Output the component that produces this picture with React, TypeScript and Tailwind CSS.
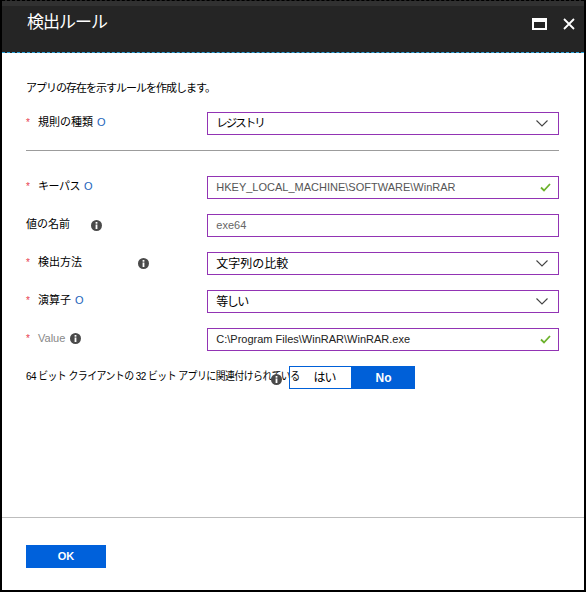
import React from 'react'

const jp = "font-['Segoe_UI','Liberation_Sans','Noto_Sans_CJK_JP',sans-serif]"
const boxCls = 'h-[23px] w-[353px] border border-[#9234b4] flex items-center pl-[8px] pr-[6px]'
const latin = " font-['Liberation_Sans',sans-serif] text-[11px]"

function Info({ className = '' }: { className?: string }) {
  return (
    <svg width="11" height="11" viewBox="0 0 11 11" className={className}>
      <circle cx="5.5" cy="5.5" r="5.5" fill="#4a4a4a" />
      <rect x="4.6" y="2" width="1.8" height="1.7" fill="#fff" />
      <rect x="4.6" y="4.5" width="1.8" height="4.5" fill="#fff" />
    </svg>
  )
}

function Chevron() {
  return (
    <svg width="12" height="7" viewBox="0 0 12 7" className="ml-auto mr-[4px]">
      <polyline points="0.5,0.5 6,6 11.5,0.5" fill="none" stroke="#444" strokeWidth="1.1" />
    </svg>
  )
}

function Check() {
  return (
    <svg width="11" height="9" viewBox="0 0 11 9" className="ml-auto mr-[1px]">
      <polyline points="1,4.5 4,7.5 10,1" fill="none" stroke="#6cb22c" strokeWidth="1.8" />
    </svg>
  )
}

function Star() {
  return <span className="text-[#e8404f] text-[10px] w-[12px] inline-block">*</span>
}

function Ring() {
  return <span className="ml-[4px] text-[#1d64bb] text-[11px] font-['Liberation_Sans',sans-serif]">O</span>
}

type RowProps = {
  label: React.ReactNode
  children: React.ReactNode
  className?: string
}

function Row({ label, children, className = '' }: RowProps) {
  return (
    <div className={'flex items-center ' + className}>
      <div className="w-[182px] flex items-center text-[11px] text-black -mt-[3px]">{label}</div>
      {children}
    </div>
  )
}

export default function App() {
  return (
    <div className={'w-[586px] h-[592px] bg-white border-x-2 border-b-2 border-black flex flex-col ' + jp}>
      {/* title bar */}
      <div className="h-[53px] bg-[#252525] border-t-[1px] border-black border-b border-b-[#2aa3dc] border-dashed flex flex-col shrink-0">
        <div className="h-[5px] bg-[#313131]" />
        <div className="flex-1 flex items-center pl-[25px] pr-[9px] -mt-[12px]">
          <span className="text-white text-[17px] tracking-[-1px]">検出ルール</span>
          <div className="ml-auto flex items-center gap-[16px] mt-[2px]">
            <svg width="15" height="12" viewBox="0 0 15 12">
              <rect x="1" y="1" width="13" height="10" fill="none" stroke="#fff" strokeWidth="2" />
              <rect x="1" y="1" width="13" height="3" fill="#fff" />
            </svg>
            <svg width="12" height="12" viewBox="0 0 12 12">
              <path d="M1 1 L11 11 M11 1 L1 11" stroke="#fff" strokeWidth="1.8" />
            </svg>
          </div>
        </div>
      </div>

      {/* body */}
      <div className="flex-1 pl-[24px] pr-[25px] pt-[28px]">
        <div className="text-[11px] leading-[14px] tracking-[-1px] text-black">アプリの存在を示すルールを作成します。</div>

        <Row className="mt-[17px]" label={<><Star />規則の種類<Ring /></>}>
          <div className={boxCls + ' text-black text-[11.5px]'}>
            <span className="tracking-[-2px]">レジストリ</span>
            <Chevron />
          </div>
        </Row>

        <div className="mt-[15px] h-px bg-[#9c9c9c] w-[533px]" />

        <Row className="mt-[25px]" label={<><Star /><span className="tracking-[-0.5px]">キーパス</span><Ring /></>}>
          <div className={boxCls + ' text-[#555]' + latin}>
            HKEY_LOCAL_MACHINE\SOFTWARE\WinRAR
            <Check />
          </div>
        </Row>

        <Row className="mt-[15px]" label={<>値の名前<Info className="ml-[21px] mt-[3px]" /></>}>
          <div className={boxCls + ' text-[#666]' + latin}>exe64</div>
        </Row>

        <Row className="mt-[15px]" label={<><Star />検出方法<Info className="ml-[56px] mt-[3px]" /></>}>
          <div className={boxCls + ' text-black text-[12px]'}>
            文字列の比較
            <Chevron />
          </div>
        </Row>

        <Row className="mt-[15px]" label={<><Star />演算子<Ring /></>}>
          <div className={boxCls + ' text-black text-[12px]'}>
            <span className="tracking-[-1.5px]">等しい</span>
            <Chevron />
          </div>
        </Row>

        <Row
          className="mt-[15px]"
          label={
            <>
              <Star />
              <span className="text-[#888] font-['Liberation_Sans',sans-serif] text-[11px]">Value</span>
              <Info className="ml-[5px] mt-[1px]" />
            </>
          }
        >
          <div className={boxCls + ' text-[#222]' + latin}>
            C:\Program Files\WinRAR\WinRAR.exe
            <Check />
          </div>
        </Row>

        <div className="mt-[15px] flex items-center">
          <div className="relative w-[263px] shrink-0 whitespace-nowrap text-[11px] text-black -mt-[2px]">
            <div className="origin-left scale-x-[0.9] tracking-[-0.6px]">
              64 ビット クライアントの 32 ビット アプリに関連付けられている
            </div>
            <Info className="absolute left-[245px] top-[6px]" />
          </div>
          <div className="flex h-[23px] relative">
            <div className="w-[63px] border border-[#0060d8] flex items-center justify-center pl-[8px] text-[12px] text-black tracking-[-1px]">はい</div>
            <div className="w-[63px] bg-[#0060d8] flex items-center justify-center text-[12px] font-bold text-white font-['Liberation_Sans',sans-serif]">
              No
            </div>
          </div>
        </div>
      </div>

      {/* footer */}
      <div className="h-[73px] border-t border-[#bdbdbd] shrink-0 pl-[24px] pt-[25px]">
        <button className="w-[80px] h-[23px] bg-[#0061db] text-white text-[11px] font-bold font-['Liberation_Sans',sans-serif]">
          OK
        </button>
      </div>
    </div>
  )
}
